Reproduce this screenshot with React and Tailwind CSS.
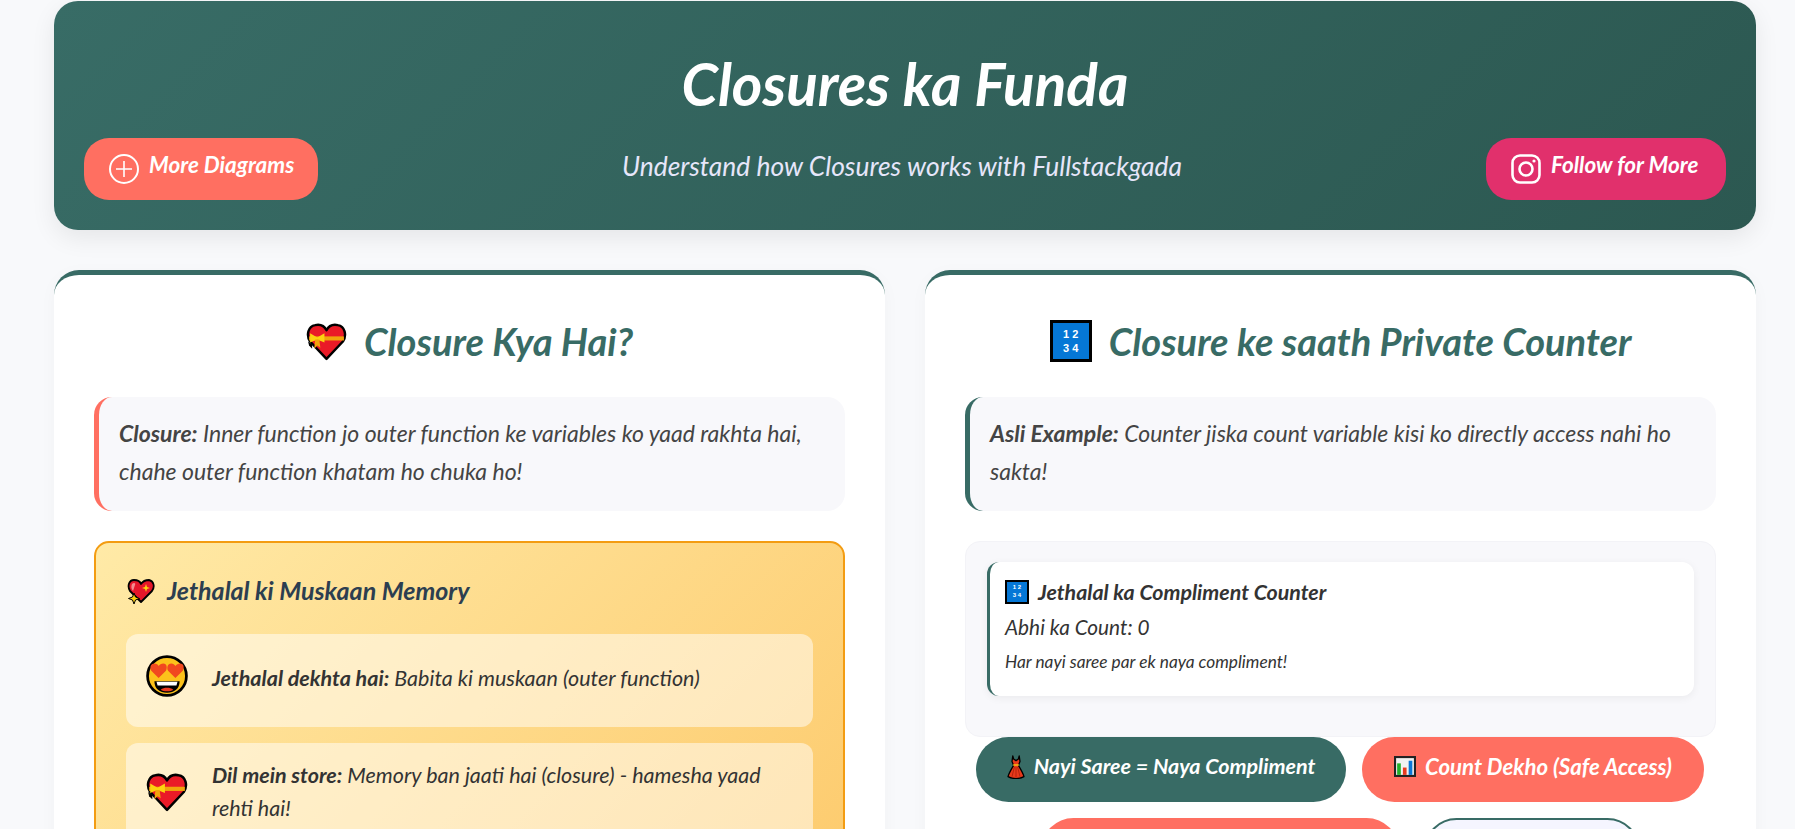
import React from "react";

const font = { fontFamily: '"Lato", "Noto Sans", sans-serif' };

function GiftHeart({ className }) {
  return (
    <svg viewBox="0 0 40 38" className={className}>
      <path d="M20 36 L4 19 C0 13 2 4 9 3 C14 2 18 4 20 8 C22 4 26 2 31 3 C38 4 40 13 36 19 Z" fill="#ea1a27" stroke="#000" strokeWidth="2.4" strokeLinejoin="round" />
      <rect x="3" y="14" width="34" height="4" fill="#f1a30c" />
      <path d="M4 11 L11 15 L18 11 L18 20 L11 17 L4 20 Z" fill="#fcd20f" />
      <path d="M9 17 L13 17 L14 25 L11 23 L8 26 Z" fill="#f1a30c" />
      <path d="M2 19 L6 22 L6 26 L3 23 Z" fill="#000" />
    </svg>
  );
}

function SparkleHeart({ className }) {
  return (
    <svg viewBox="0 0 28 26" className={className}>
      <path d="M14 24 L3 13 C0 8 2 2 7 2 C10 2 13 3 14 6 C16 3 19 2 22 2 C27 3 28 9 25 13 Z" fill="#e5162a" stroke="#000" strokeWidth="1.8" strokeLinejoin="round" />
      <path d="M5 6 C7 4 9 5 8 7 L6 13 C4 11 4 8 5 6Z" fill="#f48b8f" />
      <path d="M19 6 L20 9 L23 10 L20 11 L19 14 L18 11 L15 10 L18 9Z" fill="#fcd20f" />
      <path d="M7 15 L8.5 19 L12.5 20.5 L8.5 22 L7 26 L5.5 22 L1.5 20.5 L5.5 19Z" fill="#fcd20f" stroke="#000" strokeWidth="1" />
    </svg>
  );
}

function HeartEyes({ className }) {
  return (
    <svg viewBox="0 0 40 40" className={className}>
      <circle cx="20" cy="20" r="18.5" fill="#fcc21b" stroke="#000" strokeWidth="2.6" />
      <path d="M12 22 L5 15 C3 11 5 8 8 8 C10 8 11.5 9 12 10.5 C13 9 14.5 8 16.5 8 C20 8 20.5 12 19 15 Z" fill="#f1491f" />
      <path d="M28 22 L21 15 C19.5 12 20.5 8 24 8 C26 8 27 9 28 10.5 C29 9 30.5 8 32.5 8 C35.5 8 37 11 35 15 Z" fill="#f1491f" />
      <path d="M8 25 H32 C32 32 27 36 20 36 C13 36 8 32 8 25Z" fill="#000" />
      <path d="M10 25.5 H30 L29 29 H11Z" fill="#fff" />
      <path d="M14 33 C17 30.5 23 30.5 26 33 C23 35 17 35 14 33Z" fill="#ea3a1f" />
    </svg>
  );
}

function NumBox({ className }) {
  return (
    <span className={"inline-flex flex-col items-center justify-center shrink-0 bg-[#0577d6] border-black text-white font-bold not-italic leading-[1.3] " + className} style={{ fontFamily: '"Liberation Sans", sans-serif' }}>
      <span>1 2</span>
      <span>3 4</span>
    </span>
  );
}

function Dress({ className }) {
  return (
    <svg viewBox="0 0 22 30" className={className}>
      <path d="M7 1 L8 5 L11 7 L14 5 L15 1 L16 8 L14 13 C17 18 20 23 21 27 C15 30 7 30 1 27 C2 23 5 18 8 13 L6 8 Z" fill="#e8391a" stroke="#000" strokeWidth="1.6" strokeLinejoin="round" />
      <rect x="7.5" y="11.5" width="7" height="2" fill="#f7b612" />
      <path d="M9 15 L6 27 M13 15 L16 27 M11 15 V28" stroke="#a51f0c" strokeWidth="1" />
    </svg>
  );
}

function Chart({ className }) {
  return (
    <svg viewBox="0 0 21 20" className={className}>
      <rect x="1" y="1" width="19" height="18" fill="#f2f2f2" stroke="#222" strokeWidth="2" />
      <rect x="3" y="7" width="3.5" height="11" fill="#23b02a" />
      <rect x="8.5" y="11" width="3.5" height="7" fill="#ea3a1f" />
      <rect x="14" y="4.5" width="3.5" height="13.5" fill="#0a76d6" />
    </svg>
  );
}

function PlusCircle() {
  return (
    <svg viewBox="0 0 30 30" className="w-[30px] h-[30px] shrink-0 mt-[6px]" fill="none" stroke="#fff" strokeWidth="2">
      <circle cx="15" cy="15" r="14" />
      <path d="M15 7 V23 M7 15 H23" strokeWidth="1.6" />
    </svg>
  );
}

function Insta() {
  return (
    <svg viewBox="0 0 30 30" className="w-[30px] h-[30px] shrink-0 mt-[6px]" fill="none" stroke="#fff" strokeWidth="2.6">
      <rect x="1.5" y="1.5" width="27" height="27" rx="7.5" />
      <circle cx="15" cy="15" r="6.5" />
      <circle cx="23" cy="7" r="1.6" fill="#fff" stroke="none" />
    </svg>
  );
}

function Card({ icon, title, children }) {
  return (
    <section className="bg-white rounded-[25px] border-t-[5px] border-[#386b65] px-10 pt-[34px] shadow-[0_4px_18px_rgba(0,0,0,0.03)] min-h-[700px]">
      <h2 className="flex items-center justify-center gap-[17px] h-[56px] pt-[8px] text-[#386b65] text-[38px] font-bold italic leading-none">
        {icon}
        <span>{title}</span>
      </h2>
      {children}
    </section>
  );
}

function Callout({ border, label, text }) {
  return (
    <div className={"mt-[32px] h-[114px] rounded-[18px] border-l-[5px] bg-[#f8f8fb] pl-[20px] pr-[24px] pt-[18px] text-[23px] leading-[37.5px] italic text-[#444] " + border}>
      <strong className="font-bold">{label}</strong> {text}
    </div>
  );
}

function MemoryItem({ icon, h, children }) {
  return (
    <div className={"flex items-center gap-[24px] bg-white/50 rounded-[12px] pl-[20px] pr-[24px] text-[21.5px] leading-[33px] italic text-[#333] " + h}>
      {icon}
      <div>{children}</div>
    </div>
  );
}

function Pill({ className, children }) {
  return (
    <button className={"flex items-center justify-center gap-[9px] h-[65px] pb-[6px] rounded-[33px] text-white text-[21.5px] font-bold italic " + className}>
      {children}
    </button>
  );
}

export default function App() {
  return (
    <div className="h-[829px] overflow-hidden bg-[#f8f9fb] pl-[54px] pr-[39px] pt-px" style={font}>
      <header className="h-[229px] rounded-[24px] bg-[linear-gradient(135deg,#386c66,#2c5851)] shadow-[0_8px_24px_rgba(0,0,0,0.08)] px-[30px] flex flex-col">
        <h1 className="mt-[47px] h-[70px] text-center text-white text-[58.5px] leading-[70px] font-bold italic">Closures ka Funda</h1>
        <div className="mt-[20px] flex items-center justify-between">
          <a className="flex gap-[10px] w-[234px] h-[62px] pl-[25px] pt-[12px] rounded-[25px] bg-[#ff6f61] text-white text-[22.5px] leading-[30px] font-bold italic">
            <span className="-mt-[2px] shrink-0"><PlusCircle /></span>
            <span>More Diagrams</span>
          </a>
          <p className="-mt-[7px] text-[#e6e6fa] text-[26.4px] leading-[32px] italic">Understand how Closures works with Fullstackgada</p>
          <a className="flex gap-[10px] w-[240px] h-[62px] pl-[25px] pt-[12px] rounded-[25px] bg-[#e1306c] text-white text-[22.5px] leading-[30px] font-bold italic">
            <span className="-mt-[2px] shrink-0"><Insta /></span>
            <span>Follow for More</span>
          </a>
        </div>
      </header>

      <main className="mt-[40px] grid grid-cols-2 gap-[40px]">
        <Card icon={<GiftHeart className="w-[41px] h-[39px]" />} title="Closure Kya Hai?">
          <Callout border="border-[#ff6f61]" label="Closure:" text="Inner function jo outer function ke variables ko yaad rakhta hai, chahe outer function khatam ho chuka ho!" />
          <div className="mt-[30px] rounded-[15px] border-2 border-[#f39c12] bg-[linear-gradient(135deg,#ffeaa7,#fdcb6e)] px-[30px] pt-[25px] pb-[30px]">
            <h3 className="flex items-center gap-[12px] h-[46px] text-[#2c3e50] text-[25px] font-bold italic">
              <SparkleHeart className="w-[28px] h-[26px] ml-[1px]" />
              <span>Jethalal ki Muskaan Memory</span>
            </h3>
            <div className="mt-[20px] flex flex-col gap-[16px]">
              <MemoryItem h="h-[93px]" icon={<HeartEyes className="w-[42px] h-[42px] shrink-0 -mt-[9px]" />}>
                <p className="-mt-[4px]"><strong className="font-bold">Jethalal dekhta hai:</strong> Babita ki muskaan (outer function)</p>
              </MemoryItem>
              <MemoryItem h="h-[98px]" icon={<GiftHeart className="w-[42px] h-[40px] shrink-0" />}>
                <p><strong className="font-bold">Dil mein store:</strong> Memory ban jaati hai (closure) - hamesha yaad rehti hai!</p>
              </MemoryItem>
            </div>
          </div>
        </Card>

        <Card icon={<NumBox className="w-[42px] h-[42px] border-[3px] text-[11px]" />} title="Closure ke saath Private Counter">
          <Callout border="border-[#386b65]" label="Asli Example:" text="Counter jiska count variable kisi ko directly access nahi ho sakta!" />
          <div className="mt-[30px] h-[196px] rounded-[15px] border border-[#f3f3f7] bg-[#f8f8fb] px-[21px] pt-[20px]">
            <div className="h-[134px] rounded-[12px] border-l-[3px] border-[#386b65] bg-white pl-[15px] pt-[14px] shadow-[0_2px_8px_rgba(0,0,0,0.06)] text-[#333] italic">
              <h4 className="flex items-center gap-[9px] h-[32px] text-[21.4px] font-bold">
                <NumBox className="w-[24px] h-[24px] border-2 text-[6px]" />
                <span>Jethalal ka Compliment Counter</span>
              </h4>
              <p className="mt-[2px] text-[20.8px] leading-[34px]">Abhi ka Count: 0</p>
              <p className="text-[17.3px] leading-[36px]">Har nayi saree par ek naya compliment!</p>
            </div>
          </div>
          <div className="flex gap-[16px] pl-[11px]">
            <Pill className="w-[370px] bg-[#386b65]"><Dress className="w-[18px] h-[24px]" />Nayi Saree = Naya Compliment</Pill>
            <Pill className="w-[342px] bg-[#ff6f61] !text-[22.2px]"><Chart className="w-[22px] h-[21px]" />Count Dekho (Safe Access)</Pill>
          </div>
          <div className="mt-[16px] flex gap-[25px] pl-[76px]">
            <Pill className="w-[358px] bg-[#ff6f61]">Direct Access Try Karo</Pill>
            <Pill className="w-[216px] bg-[#f5f5ff] border-2 border-[#386b65] !text-[#386b65]">Reset Karo</Pill>
          </div>
        </Card>
      </main>
    </div>
  );
}
